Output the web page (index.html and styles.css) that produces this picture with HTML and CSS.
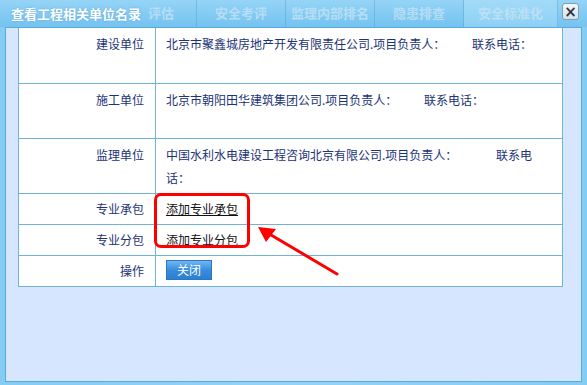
FILE: index.html
```html
<!DOCTYPE html>
<html lang="zh-CN">
<head>
    <meta charset="UTF-8">
    <title>查看工程相关单位名录</title>
    <link rel="stylesheet" href="styles.css">
</head>
<body>
    <div class="dialog">
        <div class="title-bar">
            <div class="bg-tabs">
                <span class="bg-tab first">评估</span>
                <span class="bg-tab">安全考评</span>
                <span class="bg-tab">监理内部排名</span>
                <span class="bg-tab">隐患排查</span>
                <span class="bg-tab active">安全标准化</span>
            </div>
            <span class="title">查看工程相关单位名录</span>
            <button class="close-btn" title="关闭">&times;</button>
        </div>
        <div class="dialog-body">
            <table class="unit-table">
                <tr class="tall">
                    <td class="label">建设单位</td>
                    <td class="value">北京市聚鑫城房地产开发有限责任公司.项目负责人：&emsp;&emsp;&nbsp;联系电话：</td>
                </tr>
                <tr class="tall">
                    <td class="label">施工单位</td>
                    <td class="value">北京市朝阳田华建筑集团公司.项目负责人：&emsp;&emsp;&nbsp;联系电话：</td>
                </tr>
                <tr class="tall">
                    <td class="label">监理单位</td>
                    <td class="value">中国水利水电建设工程咨询北京有限公司.项目负责人：&emsp;&emsp;&emsp;&nbsp;联系电话：</td>
                </tr>
                <tr class="short">
                    <td class="label">专业承包</td>
                    <td class="value"><a href="#">添加专业承包</a></td>
                </tr>
                <tr class="short">
                    <td class="label">专业分包</td>
                    <td class="value"><a href="#">添加专业分包</a></td>
                </tr>
                <tr class="action">
                    <td class="label">操作</td>
                    <td class="value"><button class="btn-close">关闭</button></td>
                </tr>
            </table>
        </div>
        <!-- red annotation drawn over the screenshot -->
        <div class="mark-box"></div>
        <svg class="mark-arrow" width="587" height="385" viewBox="0 0 587 385">
            <line x1="337" y1="274" x2="266" y2="232" stroke="#ff0000" stroke-width="3" stroke-linecap="round"/>
            <polygon points="258,227 276,229 266,242" fill="#ff0000"/>
        </svg>
    </div>
</body>
</html>
```

FILE: styles.css
```css
body {
    margin: 0;
    padding: 0;
    overflow: hidden;
    font-family: "Noto Sans CJK SC", "DejaVu Sans", sans-serif;
    font-size: 12px;
    background-color: #8ccff4;
}

.dialog {
    position: relative;
    display: flex;
    flex-direction: column;
    width: 587px;
    height: 385px;
    background: linear-gradient(to right, #84ccf3, #93d3f6 50%, #84ccf3);
}

.title-bar {
    position: relative;
    display: flex;
    align-items: center;
    height: 27px;
    padding: 0 8px 0 11px;
    background: linear-gradient(#95d4f6, #74c3f0);
    flex: none;
}

.bg-tabs {
    position: absolute;
    left: 108px;
    top: 0;
    bottom: 0;
    display: flex;
}

.bg-tab {
    display: flex;
    align-items: center;
    justify-content: center;
    width: 88px;
    padding-bottom: 2px;
    border-right: 1px solid rgba(80, 160, 215, 0.45);
    color: rgba(200, 228, 245, 0.75);
    font-size: 13px;
    font-weight: bold;
}

.bg-tab.first {
    justify-content: flex-end;
    padding-right: 22px;
    width: 66px;
}

.bg-tab.active {
    width: 93px;
    background-color: rgba(190, 232, 252, 0.35);
}

.title {
    position: relative;
    color: #fff;
    font-size: 13px;
    font-weight: bold;
    padding-bottom: 1px;
    text-shadow: 0 0 2px rgba(40, 110, 170, 0.4);
}

.close-btn {
    position: relative;
    margin-left: auto;
    margin-top: -4px;
    width: 17px;
    height: 17px;
    padding: 0;
    border: 1px solid #7f9fb5;
    border-radius: 3px;
    background: linear-gradient(#f4f7fa, #d7e0e8);
    color: #2c3640;
    font-family: "DejaVu Sans", sans-serif;
    font-size: 15px;
    font-weight: bold;
    line-height: 14px;
    cursor: pointer;
}

.dialog-body {
    flex: 1;
    margin: 0 5px 3px 5px;
    border: 1px solid #5aa9dc;
    background-color: #d6e6fe;
}

.unit-table {
    margin-left: 12px;
    width: 545px;
    border-collapse: collapse;
    background-color: #fff;
    color: #1c3376;
}

.unit-table td {
    box-sizing: border-box;
    border: 1px solid #6fb3d6;
    padding: 0;
}

.unit-table tr:first-child td {
    border-top: none;
}

.unit-table .label {
    width: 137px;
    padding-right: 11px;
    text-align: right;
}

.unit-table .value {
    padding-left: 10px;
    padding-right: 26px;
}

.unit-table tr.tall td {
    height: 55px;
    padding-top: 4px;
    line-height: 23px;
    vertical-align: top;
}

.unit-table tr.short td {
    height: 31px;
    vertical-align: middle;
}

.unit-table tr.action td {
    height: 31px;
    vertical-align: middle;
}

.unit-table a {
    color: #111;
    text-decoration: underline;
}

.btn-close {
    display: block;
    width: 46px;
    height: 20px;
    margin-top: -2px;
    padding: 0;
    border: 1px solid #2a76c4;
    background: linear-gradient(#6fb6f2, #3a8ddc 50%, #2b7fd2);
    color: #fff;
    font-family: "Noto Sans CJK SC", sans-serif;
    font-size: 12px;
    line-height: 18px;
    cursor: pointer;
}

.mark-box {
    position: absolute;
    left: 154px;
    top: 193px;
    width: 90px;
    height: 49px;
    border: 3px solid #ff0000;
    border-radius: 7px;
}

.mark-arrow {
    position: absolute;
    left: 0;
    top: 0;
    pointer-events: none;
}
```
